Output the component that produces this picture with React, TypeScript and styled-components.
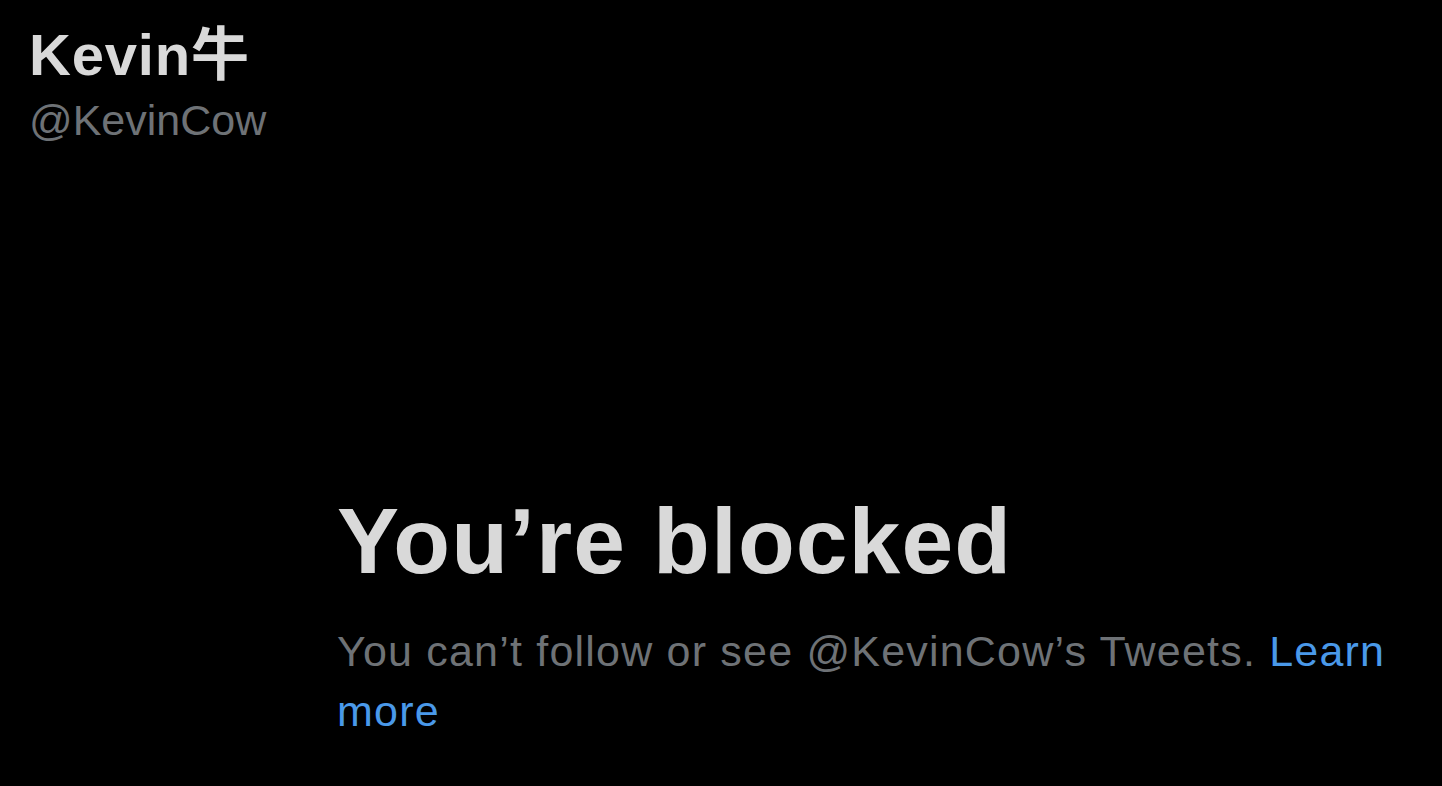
import React from "react";
import styled, { createGlobalStyle } from "styled-components";

const Global = createGlobalStyle`
  html, body { margin: 0; padding: 0; background: #000; }
  body { font-family: "Liberation Sans", Arial, sans-serif; }
`;

const Page = styled.div`
  width: 1442px;
  height: 786px;
  background: #000;
  overflow: hidden;
  display: flex;
  flex-direction: column;
`;

const Header = styled.header`
  padding: 21px 0 0 29px;
  display: flex;
  flex-direction: column;
`;

const Name = styled.h1`
  margin: 0;
  font-family: "Liberation Sans", "Noto Sans CJK SC", sans-serif;
  font-weight: 700;
  font-size: 58px;
  line-height: 68px;
  color: #d9d9d9;
  letter-spacing: 0.8px;
`;

const Handle = styled.div`
  margin-top: 5px;
  font-size: 43px;
  line-height: 52px;
  color: #6e7276;
`;

const Blocked = styled.section`
  margin-top: 340px;
  padding-left: 337px;
  padding-right: 40px;
  display: flex;
  flex-direction: column;
`;

const Title = styled.h2`
  margin: 0;
  font-weight: 700;
  font-size: 93px;
  line-height: 110px;
  color: #d9d9d9;
  letter-spacing: 1.1px;
`;

const Sub = styled.p`
  margin: 25px 0 0;
  font-size: 43px;
  line-height: 60px;
  letter-spacing: 1.2px;
  color: #6e7276;
`;

const Link = styled.a`
  color: #4a99e9;
  text-decoration: none;
`;

export default function App() {
  return (
    <Page>
      <Global />
      <Header>
        <Name>Kevin牛</Name>
        <Handle>@KevinCow</Handle>
      </Header>
      <Blocked>
        <Title>You’re blocked</Title>
        <Sub>
          You can’t follow or see @KevinCow’s Tweets. <Link href="#">Learn more</Link>
        </Sub>
      </Blocked>
    </Page>
  );
}
